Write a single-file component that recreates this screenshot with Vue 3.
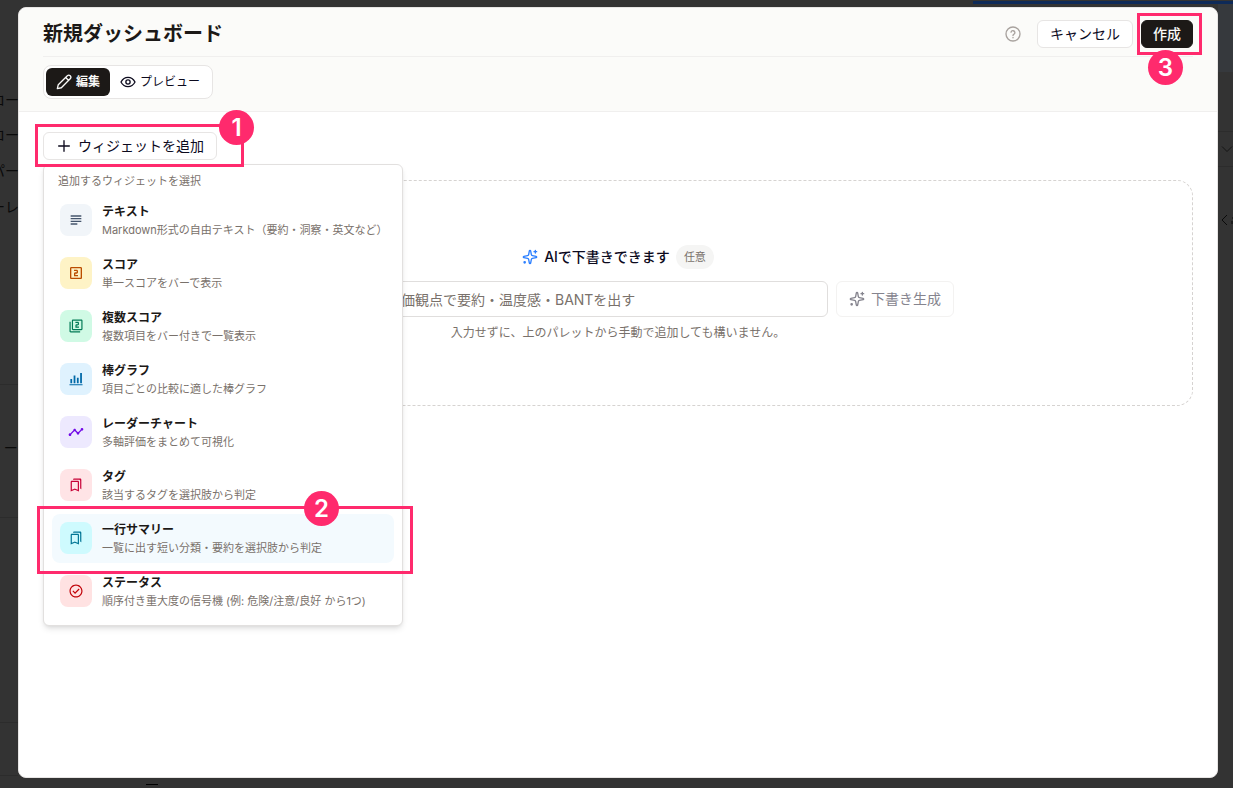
<script setup>
import { ref } from 'vue'

const prompt = ref('')

const widgets = [
  { id: 'text', title: 'テキスト', desc: 'Markdown形式の自由テキスト（要約・洞察・英文など）' },
  { id: 'score', title: 'スコア', desc: '単一スコアをバーで表示' },
  { id: 'multi', title: '複数スコア', desc: '複数項目をバー付きで一覧表示' },
  { id: 'bar', title: '棒グラフ', desc: '項目ごとの比較に適した棒グラフ' },
  { id: 'radar', title: 'レーダーチャート', desc: '多軸評価をまとめて可視化' },
  { id: 'tag', title: 'タグ', desc: '該当するタグを選択肢から判定' },
  { id: 'summary', title: '一行サマリー', desc: '一覧に出す短い分類・要約を選択肢から判定', active: true },
  { id: 'status', title: 'ステータス', desc: '順序付き重大度の信号機 (例: 危険/注意/良好 から1つ)' },
]

const bookmarks =
  'M15 7v12.97l-4.21-1.81-.79-.34-.79.34L5 19.97V7h10m4-6H8.99C7.89 1 7 1.9 7 3h10c1.1 0 2 .9 2 2v13l2 1V3c0-1.1-.9-2-2-2zm-4 4H5c-1.1 0-2 .9-2 2v16l7-3 7 3V7c0-1.1-.9-2-2-2z'

const full = '0 0 24 24'
const loose = '-1.5 -1.5 27 27'

const icons = {
  text: { box: full, d: 'M14 17H4v2h10v-2zm6-8H4v2h16V9zM4 15h16v-2H4v2zM4 5v2h16V5H4z' },
  score: {
    box: full,
    d: 'M19 3H5c-1.1 0-2 .9-2 2v14c0 1.1.9 2 2 2h14c1.1 0 2-.9 2-2V5c0-1.1-.9-2-2-2zm0 16H5V5h14v14zm-4-4h-4v-2h2c1.1 0 2-.89 2-2V9c0-1.11-.9-2-2-2H9v2h4v2h-2c-1.1 0-2 .89-2 2v4h6v-2z',
  },
  multi: {
    box: loose,
    d: 'M3 5H1v16c0 1.1.9 2 2 2h16v-2H3V5zm18-4H7c-1.1 0-2 .9-2 2v14c0 1.1.9 2 2 2h14c1.1 0 2-.9 2-2V3c0-1.1-.9-2-2-2zm0 16H7V3h14v14zm-4-4h-4v-2h2c1.1 0 2-.89 2-2V7c0-1.11-.9-2-2-2h-4v2h4v2h-2c-1.1 0-2 .89-2 2v4h6v-2z',
  },
  bar: { box: loose, d: 'M1 21h22v1.6H1zM2.500 12h3v7h-3zM8 6h3v13H8zM13.500 10h3v9h-3zM19 2h3v17h-3z' },
  radar: {
    box: full,
    d: 'M23 8c0 1.1-.9 2-2 2-.18 0-.35-.02-.51-.07l-3.56 3.55c.05.16.07.34.07.52 0 1.1-.9 2-2 2s-2-.9-2-2c0-.18.02-.36.07-.52l-2.55-2.55c-.16.05-.34.07-.52.07s-.36-.02-.52-.07l-4.55 4.56c.05.16.07.33.07.51 0 1.1-.9 2-2 2s-2-.9-2-2 .9-2 2-2c.18 0 .35.02.51.07l4.56-4.55C8.02 9.36 8 9.18 8 9c0-1.1.9-2 2-2s2 .9 2 2c0 .18-.02.36-.07.52l2.55 2.55c.16-.05.34-.07.52-.07s.36.02.52.07l3.55-3.56C19.02 8.35 19 8.18 19 8c0-1.1.9-2 2-2s2 .9 2 2z',
  },
  tag: { box: loose, d: bookmarks },
  summary: { box: loose, d: bookmarks },
  status: {
    box: loose,
    d: 'M12 1C5.93 1 1 5.93 1 12s4.93 11 11 11 11-4.93 11-11S18.07 1 12 1zm0 20c-4.96 0-9-4.04-9-9s4.04-9 9-9 9 4.04 9 9-4.04 9-9 9zM16.6 7.9L10.4 14.1 7.4 11.1 6 12.5l4.4 4.4L18 9.3z',
  },
}

const spark =
  'M11.017 2.814a1 1 0 0 1 1.966 0l1.051 5.558a2 2 0 0 0 1.594 1.594l5.558 1.051a1 1 0 0 1 0 1.966l-5.558 1.051a2 2 0 0 0-1.594 1.594l-1.051 5.558a1 1 0 0 1-1.966 0l-1.051-5.558a2 2 0 0 0-1.594-1.594l-5.558-1.051a1 1 0 0 1 0-1.966l5.558-1.051a2 2 0 0 0 1.594-1.594zM20 2v4M22 4h-4'
</script>

<template>
  <div class="screen">
    <div class="backdrop" aria-hidden="true">
      <span class="strip"></span>
      <span class="panel"></span>
      <span class="word w1">ロー</span>
      <span class="word w2">ロー</span>
      <span class="word w3">パー</span>
      <span class="word w4">ーレ</span>
      <span class="word w5">ト、ー</span>
      <i class="rule r1"></i><i class="rule r2"></i><i class="rule r3"></i><i class="rule r4"></i>
      <i class="rule q1"></i><i class="rule q2"></i>
      <svg class="chev" viewBox="0 0 12 12"><path d="M1 3.500l5 5 5-5" /></svg>
      <svg class="back" viewBox="0 0 12 12"><path d="M6 1L1 6l5 5M11 4h1M11 7v3" /></svg>
      <i class="dash"></i>
    </div>

    <main class="modal" role="dialog" aria-labelledby="dialog-title">
      <header class="head">
        <div class="title-row">
          <h1 id="dialog-title">新規ダッシュボード</h1>
          <div class="actions">
            <button class="help" type="button" aria-label="ヘルプ">
              <svg viewBox="0 0 24 24" class="line">
                <circle cx="12" cy="12" r="10.500" />
                <path d="M9 9.300a3 3 0 0 1 5.900.8c0 2-2.900 2.500-2.900 4M12 17v.6" />
              </svg>
            </button>
            <button class="btn" type="button">キャンセル</button>
            <div class="marked">
              <button class="btn primary" type="button">作成</button>
              <span class="frame f3"></span>
              <span class="badge b3">3</span>
            </div>
          </div>
        </div>
        <div class="tabs">
          <button class="tab on" type="button">
            <svg viewBox="0 0 24 24" class="line">
              <path d="M2 22l1.400-6L17 2.700a2.900 2.900 0 0 1 4.300 4.300L8 20.600zM14.500 5.300l4.200 4.200" />
            </svg>
            編集
          </button>
          <button class="tab" type="button">
            <svg viewBox="0 0 24 24" class="line">
              <path d="M1.500 12C4 7.300 7.600 5 12 5s8 2.300 10.500 7C20 16.700 16.400 19 12 19S4 16.700 1.500 12z" />
              <circle cx="12" cy="12" r="3.200" />
            </svg>
            プレビュー
          </button>
        </div>
      </header>

      <section class="body">
        <div class="marked adder">
          <button class="btn add" type="button" aria-haspopup="menu" aria-expanded="true">
            <svg viewBox="0 0 24 24" class="line"><path d="M12 4v16M4 12h16" /></svg>
            ウィジェットを追加
          </button>

          <div class="menu" role="menu">
            <p class="menu-label">追加するウィジェットを選択</p>
            <div v-for="w in widgets" :key="w.id" class="marked">
              <button class="item" :class="{ active: w.active }" type="button" role="menuitem">
                <span class="tile" :class="w.id">
                  <svg :viewBox="icons[w.id].box"><path :d="icons[w.id].d" fill="currentColor" /></svg>
                </span>
                <span class="copy">
                  <span class="name">{{ w.title }}</span>
                  <span class="desc">{{ w.desc }}</span>
                </span>
              </button>
              <template v-if="w.active">
                <span class="frame f2"></span>
                <span class="badge b2">2</span>
              </template>
            </div>
          </div>

          <span class="frame f1"></span>
          <span class="badge b1">1</span>
        </div>

        <form class="draft" @submit.prevent>
          <div class="draft-head">
            <svg viewBox="0 0 24 24" class="line spark">
              <path :d="spark" />
              <circle cx="4" cy="20" r="1" />
            </svg>
            <label for="draft-prompt">AIで下書きできます</label>
            <span class="pill">任意</span>
          </div>
          <div class="draft-row">
            <input
              id="draft-prompt"
              v-model="prompt"
              type="text"
              placeholder="例: 営業商談の評価観点で要約・温度感・BANTを出す"
            />
            <button class="generate" type="submit" disabled>
              <svg viewBox="0 0 24 24" class="line spark">
                <path :d="spark" />
                <circle cx="4" cy="20" r="1" />
              </svg>
              下書き生成
            </button>
          </div>
          <p class="hint">入力せずに、上のパレットから手動で追加しても構いません。</p>
        </form>
      </section>
    </main>
  </div>
</template>

<style>
body {
  background: #333;
}
</style>

<style scoped>
* {
  box-sizing: border-box;
  margin: 0;
}
.screen {
  position: relative;
  display: flex;
  min-height: 100vh;
  padding: 7px 15px 10px 18px;
  overflow: hidden;
  background: #333;
  color: #0c0a1d;
  font-family: Inter, "Noto Sans CJK JP", sans-serif;
}
button,
input {
  font: inherit;
  color: inherit;
}
button {
  display: flex;
  align-items: center;
  justify-content: center;
  padding: 0;
  border: 0;
  background: none;
  white-space: nowrap;
}
svg {
  flex: none;
  width: 16px;
  height: 16px;
}
.line {
  fill: none;
  stroke: currentColor;
  stroke-width: 2;
  stroke-linecap: round;
  stroke-linejoin: round;
}

/* dimmed page behind the dialog */
.backdrop > * {
  position: absolute;
}
.strip {
  top: 1px;
  right: 0;
  width: 260px;
  height: 3px;
  background: #0e2a58;
}
.panel {
  top: 4px;
  right: 0;
  width: 15px;
  height: 68px;
  background: #36393d;
}
.word {
  left: -9px;
  color: #0a0a0a;
  font-size: 14px;
  line-height: 20px;
  white-space: nowrap;
}
.w1 { top: 90px; }
.w2 { top: 125px; }
.w3 { top: 161px; }
.w4 { top: 197px; }
.w5 { top: 438px; left: -24px; }
.rule {
  left: 0;
  width: 18px;
  height: 1px;
  background: #2c2c2c;
}
.r1 { top: 384px; }
.r2 { top: 517px; }
.r3 { top: 722px; }
.r4 { top: 775px; }
.q1,
.q2 {
  left: auto;
  right: 0;
}
.q1 { top: 131px; }
.q2 { top: 166px; }
.chev,
.back {
  right: 0;
  width: 12px;
  height: 12px;
  fill: none;
  stroke: #151515;
}
.chev { top: 143px; }
.back { top: 214px; stroke: #0a0a0a; }
.dash {
  bottom: 3px;
  left: 146px;
  width: 12px;
  height: 1px;
  background: #000;
}

/* dialog */
.modal {
  position: relative;
  flex: 1;
  min-width: 0;
  border: 1px solid #e7e5e4;
  border-radius: 8px;
  background: #fff;
}
.head {
  padding: 0 24px 12px;
  border-bottom: 1px solid #f0efee;
  border-radius: 8px 8px 0 0;
  background: #fbfbf9;
}
.title-row {
  display: flex;
  align-items: center;
  justify-content: space-between;
  height: 49px;
  padding-top: 3px;
  border-bottom: 1px solid #f0efee;
}
h1 {
  color: #1c1917;
  font-size: 20px;
  line-height: 28px;
  font-weight: 600;
}
.actions {
  display: flex;
  align-items: center;
  gap: 8px;
}
.help {
  width: 32px;
  height: 28px;
  color: #a8a29e;
}
.btn {
  height: 28px;
  padding: 0 12px;
  border: 1px solid #e7e5e4;
  border-radius: 6px;
  background: #fff;
  font-size: 14px;
  line-height: 20px;
}
.primary {
  padding: 0 11px;
  border-color: #1c1917;
  background: #1c1917;
  color: #fafaf9;
  font-weight: 500;
}
.tabs {
  display: flex;
  width: fit-content;
  margin-top: 8px;
  padding: 2px;
  border: 1px solid #e7e5e4;
  border-radius: 8px;
  background: #fff;
}
.tab {
  gap: 4px;
  height: 28px;
  padding: 0 10px;
  border-radius: 6px;
  font-size: 12px;
  line-height: 16px;
}
.tab.on {
  background: #1c1917;
  color: #fafaf9;
  font-weight: 600;
}
.body {
  padding: 20px 24px;
}
.marked {
  position: relative;
}
.adder {
  width: fit-content;
  z-index: 2;
}
.add {
  gap: 6px;
}

/* widget menu */
.menu {
  position: absolute;
  top: 32px;
  left: 0;
  width: 360px;
  padding: 8px;
  border: 1px solid #e2e0df;
  border-radius: 6px;
  background: #fff;
  box-shadow: 0 4px 6px -1px #0000001a, 0 2px 4px -2px #0000001a;
}
.menu-label {
  padding: 0 6px;
  margin-bottom: 7px;
  color: #79716b;
  font-size: 11px;
  line-height: 16px;
}
.item {
  align-items: flex-start;
  justify-content: flex-start;
  gap: 10px;
  width: 100%;
  margin-bottom: 4px;
  padding: 8px;
  border-radius: 8px;
  text-align: left;
}
.marked:last-child > .item {
  margin-bottom: 1px;
}
.item.active {
  background: #f3fafe;
}
.tile {
  display: flex;
  align-items: center;
  justify-content: center;
  flex: none;
  width: 32px;
  height: 32px;
  border-radius: 8px;
}
.tile.text { background: #f1f5f9; color: #45556c; }
.tile.score { background: #fef3c6; color: #bb4d00; }
.tile.multi { background: #d0fae5; color: #007a55; }
.tile.bar { background: #dff2fe; color: #0069a8; }
.tile.radar { background: #ede9fe; color: #7008e7; }
.tile.tag { background: #ffe4e6; color: #c70036; }
.tile.summary { background: #cefafe; color: #007595; }
.tile.status { background: #ffe2e2; color: #c10007; }
.copy {
  display: flex;
  flex-direction: column;
  gap: 4px;
}
.name {
  color: #1c1917;
  font-size: 12px;
  line-height: 15px;
  font-weight: 600;
}
.desc {
  color: #79716b;
  font-size: 11px;
  line-height: 14px;
}

/* AI draft area */
.draft {
  display: flex;
  flex-direction: column;
  align-items: center;
  margin-top: 20px;
  padding: 64px 24px;
  border: 1px dashed #d6d3d1;
  border-radius: 16px;
}
.draft-head {
  display: flex;
  align-items: center;
  gap: 6px;
  font-size: 14px;
  line-height: 20px;
  font-weight: 500;
}
.draft-head .spark {
  color: #2b7fff;
}
.pill {
  padding: 0 8px;
  border-radius: 12px;
  background: #f5f5f4;
  color: #79716b;
  font-size: 11px;
  line-height: 24px;
  font-weight: 400;
}
.draft-row {
  display: flex;
  gap: 8px;
  width: 100%;
  max-width: 672px;
  margin-top: 12px;
}
.draft-row input {
  flex: 1;
  min-width: 0;
  height: 36px;
  padding: 0 12px;
  border: 1px solid #e0dedd;
  border-radius: 6px;
  background: #fff;
  font-size: 14px;
}
.draft-row input::placeholder {
  color: #79716b;
  opacity: 1;
}
.generate {
  gap: 6px;
  height: 36px;
  padding: 0 12px;
  border: 1px solid #f3f2f1;
  border-radius: 6px;
  color: #85848e;
  font-size: 14px;
  line-height: 20px;
}
.hint {
  margin-top: 7px;
  color: #79716b;
  font-size: 12px;
  line-height: 17px;
}

/* numbered callouts */
.frame {
  position: absolute;
  border: 3px solid #ff2a6d;
  pointer-events: none;
}
.badge {
  position: absolute;
  width: 35px;
  height: 35px;
  border-radius: 50%;
  background: #ff2a6d;
  color: #fff;
  font-size: 24px;
  line-height: 35px;
  font-weight: 600;
  text-align: center;
}
.f1 { inset: -8px -27px -7px -8px; }
.b1 { top: -22px; right: -37px; }
.f2 { inset: -8px -19px -11px -15px; z-index: 1; }
.b2 { top: -23px; right: 55px; z-index: 1; }
.f3 { inset: -7px -9px -7px -4px; }
.b3 { top: 30px; left: 7px; }
</style>
